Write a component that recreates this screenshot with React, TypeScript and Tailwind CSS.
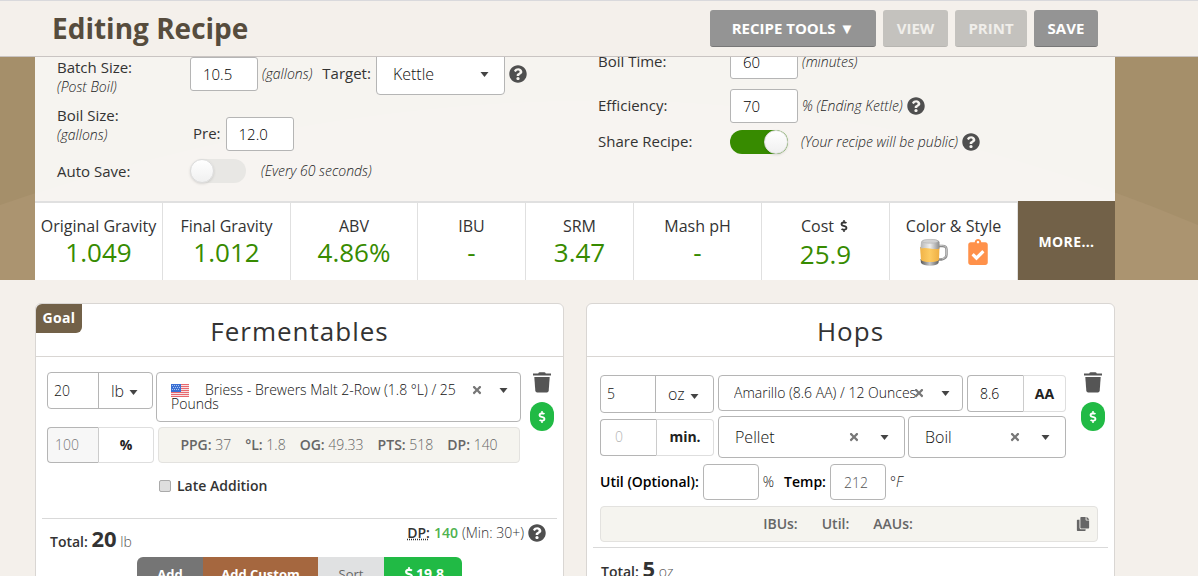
import type { ReactNode } from 'react';
import { FaClipboardCheck, FaCopy, FaDollarSign, FaQuestionCircle, FaTimes } from 'react-icons/fa';

const STATS = [
  { label: 'Original Gravity', value: '1.049' },
  { label: 'Final Gravity', value: '1.012' },
  { label: 'ABV', value: '4.86%' },
  { label: 'IBU', value: '-' },
  { label: 'SRM', value: '3.47' },
  { label: 'Mash pH', value: '-' },
];

const FERMENTABLE_FACTS = [
  ['PPG:', '37'],
  ['°L:', '1.8'],
  ['OG:', '49.33'],
  ['PTS:', '518'],
  ['DP:', '140'],
];

function Caret({ className = '' }: { className?: string }) {
  return (
    <svg viewBox="0 0 9 5" className={`h-[5px] w-[9px] fill-[#444] ${className}`} aria-hidden="true">
      <path d="M.5 0h8L4.5 5z" />
    </svg>
  );
}

function Help({ label }: { label: string }) {
  return (
    <button type="button" aria-label={label} className="shrink-0">
      <FaQuestionCircle className="size-[18px] text-[#4f4f4f]" />
    </button>
  );
}

function Trash() {
  return (
    <svg viewBox="0 0 18 21" className="h-[21px] w-[18px] fill-[#555]" aria-hidden="true">
      <path d="M0 1.5h5.2Q5.600 .3 6.800 .3h4.400q1.200 0 1.600 1.200H18v2H0z" />
      <path d="M1.300 5h15.400l-1 13.800q-.2 1.700-1.900 1.700H4.200q-1.700 0-1.900-1.700z" />
    </svg>
  );
}

function RowActions({ name }: { name: string }) {
  return (
    <div className="flex w-6 flex-col items-center gap-[9px]">
      <button type="button" aria-label={`Remove ${name}`}><Trash /></button>
      <button
        type="button"
        aria-label={`Set price of ${name}`}
        className="flex h-[29px] w-6 items-center justify-center rounded-full bg-[#21ba45] text-white"
      >
        <FaDollarSign className="size-3" />
      </button>
    </div>
  );
}

function BeerMug() {
  return (
    <svg viewBox="0 0 28 28" className="size-7" aria-hidden="true">
      <defs>
        <linearGradient id="foam" x1="0" x2="1">
          <stop offset="0" stopColor="#b5b5b5" />
          <stop offset=".5" stopColor="#efefef" />
          <stop offset="1" stopColor="#8b8b8b" />
        </linearGradient>
        <linearGradient id="beer" x1="0" x2="1">
          <stop offset="0" stopColor="#f0b247" />
          <stop offset=".5" stopColor="#fdcb62" />
          <stop offset="1" stopColor="#eeae42" />
        </linearGradient>
        <linearGradient id="base" x1="0" x2="1">
          <stop offset="0" stopColor="#555" />
          <stop offset=".5" stopColor="#c9c9c9" />
          <stop offset="1" stopColor="#5c5c5c" />
        </linearGradient>
      </defs>
      <path d="M18 8h4.500q4 0 4 3.500v5q0 4-5 5H18" fill="none" stroke="#8a8a8a" strokeWidth="2.400" />
      <path d="M18 7.500h4.500q4 0 4 3.500v5q0 4-4.500 5" fill="none" stroke="#cfcfcf" strokeWidth=".8" />
      <path d="M.5 21h18.500l-.5 4q-2 2.800-8.500 2.800T1 25z" fill="url(#base)" />
      <path d="M0 9h19.500l-.5 13q-2 2-9 2t-9-2z" fill="url(#beer)" />
      <path d="M1 4q1-3 9.200-3t9.300 3v6.500q-4 1-9.500 0T.5 10.500z" fill="url(#foam)" />
      <ellipse cx="10.200" cy="3.300" rx="8" ry="1.900" fill="#d2d2d2" stroke="#a8a8a8" strokeWidth=".5" />
    </svg>
  );
}

function UsFlag() {
  return (
    <svg viewBox="0 0 18 13" className="h-[13px] w-[18px]" aria-hidden="true">
      <rect width="18" height="13" fill="#f7e1e3" />
      <path d="M0 .5h18M0 2.500h18M0 4.500h18M0 6.500h18M0 8.500h18M0 10.500h18M0 12.500h18" stroke="#e8686e" />
      <rect width="10" height="8" fill="#3a6fd4" />
      <path d="M1 1.500h8M2 3.500h7M1 5.500h8" stroke="#a9c6f2" strokeDasharray="1 1" />
    </svg>
  );
}

function Toggle({ id, on = false }: { id: string; on?: boolean }) {
  return (
    <span className="flex shrink-0">
      <input id={id} type="checkbox" role="switch" defaultChecked={on} className="peer sr-only" />
      <label
        htmlFor={id}
        className="flex h-6 w-14 cursor-pointer rounded-full bg-[#e8e7e4] peer-checked:w-[58px] peer-checked:justify-end peer-checked:bg-[#378b00]"
      >
        <span className="size-6 rounded-full border border-[#dcdcdc] bg-linear-to-b from-white to-[#f0f0f0] shadow-sm" />
      </label>
    </span>
  );
}

type SelectProps = {
  label: string;
  value: string;
  className: string;
  selectClass: string;
  clearClass?: string;
  caretClass?: string;
};

function Dropdown({ label, value, className, selectClass, clearClass, caretClass = 'right-[15px]' }: SelectProps) {
  return (
    <div className={`relative flex shrink-0 items-center rounded border border-[#b5b5b5] bg-white ${className}`}>
      <select
        aria-label={label}
        className={`h-full w-full appearance-none bg-transparent text-[#111] outline-none ${selectClass}`}
      >
        <option>{value}</option>
      </select>
      {clearClass && (
        <button type="button" aria-label={`Clear ${label}`} className={`absolute ${clearClass}`}>
          <FaTimes className="size-3 text-[#777]" />
        </button>
      )}
      <Caret className={`pointer-events-none absolute ${caretClass}`} />
    </div>
  );
}

// Amount input glued to its unit picker
function Amount({ name, value, unit, className }: { name: string; value: string; unit: string; className: string }) {
  return (
    <div className={`flex rounded border border-[#b5b5b5] bg-white ${className}`}>
      <input aria-label={`${name} amount`} defaultValue={value} className="w-0 flex-1 border-r border-[#b5b5b5] px-[6px] text-sm text-[#111]" />
      <div className="relative flex w-[51%] items-center">
        <select aria-label={`${name} unit`} className="h-full w-full appearance-none pl-3 text-base text-[#222]">
          <option>{unit}</option>
        </select>
        <Caret className="pointer-events-none absolute right-[14px] mt-1" />
      </div>
    </div>
  );
}

function Suffixed({ label, suffix, className, children }: { label: string; suffix: string; className: string; children: ReactNode }) {
  return (
    <label aria-label={label} className={`flex text-sm ${className}`}>
      {children}
      <span className="flex flex-1 items-center justify-center rounded-r border border-[#dedede] border-l-[#ccc] bg-white font-bold text-[#222]">
        {suffix}
      </span>
    </label>
  );
}

function Header() {
  return (
    <header className="relative z-10 flex h-[57px] shrink-0 items-center justify-between border-t border-b border-t-[#d9d9dc] border-b-[#c9c4c2] bg-[#f4f0eb] pr-[100px] pl-[52px]">
      <h1 className="pb-0.5 text-[28px] font-bold text-[#564c3d]">Editing Recipe</h1>
      <div className="flex gap-[7px] text-[15px] font-bold text-white">
        <button type="button" className="h-[37px] w-[166px] rounded-[3px] border-b border-[#777] bg-[#949494]">RECIPE TOOLS ▼</button>
        <button type="button" disabled className="h-[37px] w-[65px] rounded-[3px] border-b border-[#b7b5b1] bg-[#c4c2be] text-[#f0eeea]">VIEW</button>
        <button type="button" disabled className="h-[37px] w-[72px] rounded-[3px] border-b border-[#b7b5b1] bg-[#c4c2be] text-[#f0eeea]">PRINT</button>
        <button type="button" className="h-[37px] w-16 rounded-[3px] border-b border-[#777] bg-[#949494]">SAVE</button>
      </div>
    </header>
  );
}

const FIELD = 'h-[34px] w-[68px] shrink-0 rounded-[3px] border border-[#b5b5b5] bg-white px-3 text-[15px] text-black';

function RecipeForm() {
  return (
    <form className="grid grid-cols-2 bg-white/90 pb-[18px] pl-[22px] text-sm font-light whitespace-nowrap text-[#222]">
      <div className="flex flex-col gap-2 pt-3">
        <div className="flex items-start">
          <label htmlFor="batch" className="w-[133px] shrink-0 pt-1">
            <span className="block text-[15px] leading-5 font-medium text-[#333]">Batch Size:</span>
            <em className="block leading-5">(Post Boil)</em>
          </label>
          <div className="flex h-[42px] items-center">
            <input id="batch" defaultValue="10.5" className={FIELD} />
            <em className="ml-1">(gallons)</em>
            <span className="ml-2.5 text-[15px] font-medium text-[#333]">Target:</span>
            <Dropdown label="Target" value="Kettle" className="ml-[5px] h-[42px] w-[129px]" selectClass="px-4 text-base" />
            <span className="ml-1 flex"><Help label="About target" /></span>
          </div>
        </div>
        <div className="flex items-start">
          <div className="w-[133px] shrink-0">
            <span className="block text-[15px] leading-5 font-medium text-[#333]">Boil Size:</span>
            <em className="block leading-5">(gallons)</em>
          </div>
          <div className="flex items-center pt-3 pl-[3px]">
            <label htmlFor="pre" className="mr-[5px] text-[15px] font-medium text-[#333]">Pre:</label>
            <input id="pre" defaultValue="12.0" className={FIELD} />
          </div>
        </div>
        <div className="flex items-center">
          <label htmlFor="autosave" className="w-[133px] shrink-0 text-[15px] leading-5 font-medium text-[#333]">Auto Save:</label>
          <Toggle id="autosave" />
          <em className="ml-[15px]">(Every 60 seconds)</em>
        </div>
      </div>

      <div className="flex flex-col gap-2.5 pt-1 pl-3">
        <div className="flex items-center">
          <label htmlFor="boil" className="w-[132px] text-[15px] font-medium text-[#333]">Boil Time:</label>
          <input id="boil" defaultValue="60" className={FIELD} />
          <em className="ml-1">(minutes)</em>
        </div>
        <div className="flex items-center">
          <label htmlFor="efficiency" className="w-[132px] text-[15px] font-medium text-[#333]">Efficiency:</label>
          <input id="efficiency" defaultValue="70" className={FIELD} />
          <em className="mr-1 ml-1">% (Ending Kettle)</em>
          <Help label="About efficiency" />
        </div>
        <div className="-mt-[3px] flex items-center">
          <label htmlFor="share" className="w-[132px] text-[15px] font-medium text-[#333]">Share Recipe:</label>
          <Toggle id="share" on />
          <em className="mr-1 ml-[13px]">(Your recipe will be public)</em>
          <Help label="About sharing" />
        </div>
      </div>
    </form>
  );
}

function StatsBar() {
  const cell = 'flex flex-col items-center border-t-2 border-r border-[#e0e0e0] bg-white pt-[11px] whitespace-nowrap';
  return (
    <div className="grid h-[79px] grid-cols-[128fr_128fr_127fr_108fr_108fr_128fr_128fr_128fr_97fr] text-base text-[#333]">
      {STATS.map((s) => (
        <div key={s.label} className={cell}>
          <span>{s.label}</span>
          <span className="text-[26px] leading-7 font-medium text-[#378b00]">{s.value}</span>
        </div>
      ))}
      <div className={cell}>
        <span className="flex items-center gap-1">Cost <FaDollarSign className="size-3" /></span>
        <span className="pt-0.5 text-[26px] leading-7 font-medium text-[#378b00]">25.9</span>
      </div>
      <div className={cell}>
        <span>Color &amp; Style</span>
        <div className="flex items-center gap-5">
          <BeerMug />
          <FaClipboardCheck className="h-[26px] w-5 text-[#ff914a]" />
        </div>
      </div>
      <button type="button" className="bg-[#726148] pt-0.5 text-sm font-bold tracking-wide text-white">MORE...</button>
    </div>
  );
}

function CardTitle({ children }: { children: ReactNode }) {
  return (
    <h2 className="border-b border-[#d9d6d3] pt-[11px] pb-[9px] text-center text-[26px] leading-8 font-medium tracking-[1px] text-[#333]">
      {children}
    </h2>
  );
}

function Fermentables() {
  return (
    <section className="relative rounded-md border border-[#d9d6d3] bg-white font-light">
      <button type="button" className="absolute top-0 left-0 h-[29px] w-[46px] rounded-tl-md rounded-br-md bg-[#726148] pb-0.5 text-sm font-bold tracking-wide text-white">
        Goal
      </button>
      <CardTitle>Fermentables</CardTitle>

      <div className="flex justify-between px-[9px] pt-[15px] pl-[11px]">
        <div className="flex flex-col gap-[5px]">
          <div className="flex gap-[3px]">
            <Amount name="Fermentable" value="20" unit="lb" className="h-[37px] w-[106px]" />
            <div className="relative flex h-[50px] w-[365px] rounded border border-[#b5b5b5]">
              <button type="button" role="combobox" aria-expanded="false" aria-controls="malts" aria-label="Fermentable" className="w-full pr-14 pl-3.5 text-left text-sm leading-[14px] text-[#111]">
                <span className="mr-4 inline-block align-middle"><UsFlag /></span>
                Briess - Brewers Malt 2-Row (1.8 °L) / 25 Pounds
              </button>
              <button type="button" aria-label="Clear fermentable" className="absolute top-[11px] right-[37px]">
                <FaTimes className="size-3 text-[#777]" />
              </button>
              <Caret className="pointer-events-none absolute top-[15px] right-3" />
            </div>
          </div>
          <div className="flex gap-1 pr-px">
            <Suffixed label="Percent of bill" suffix="%" className="h-9 w-[107px]">
              <input readOnly value="100" className="w-[51px] rounded-l border border-r-0 border-[#b5b5b5] bg-[#f7f7f7] px-[7px] text-[#777]" />
            </Suffixed>
            <div className="flex flex-1 items-center justify-center gap-3.5 rounded border border-[#e3e2df] bg-[#f5f4ef] text-sm text-[#666]">
              {FERMENTABLE_FACTS.map(([k, v]) => (
                <span key={k}><b className="font-semibold">{k}</b> {v}</span>
              ))}
            </div>
          </div>
          <label className="mt-1 ml-28 flex h-7 items-center gap-[6px] text-sm font-semibold text-[#333]">
            <input type="checkbox" className="size-3 appearance-none rounded-xs border border-[#aaa] bg-[#dedede]" />
            Late Addition
          </label>
        </div>
        <RowActions name="fermentable" />
      </div>

      <div className="mx-[6px] mt-[18px] flex justify-between border-t border-[#d9d9d9] pr-[11px] pl-2">
        <p className="pt-1 text-sm text-[#555]">
          <b className="font-semibold text-[#333]">Total: <span className="text-[22px] font-bold">20</span></b> lb
        </p>
        <div className="flex h-7 items-center gap-1 text-sm text-[#333]">
          <abbr title="Diastatic power" className="font-semibold underline decoration-dotted">DP:</abbr>
          <b className="font-semibold text-[#4fb24f]">140</b>
          <span>(Min: 30+)</span>
          <Help label="About diastatic power" />
        </div>
      </div>

      <div className="mt-[3px] ml-[101px] flex w-[325px] overflow-hidden rounded-md text-[13px] font-bold text-white">
        <button type="button" className="h-[34px] w-[66px] bg-[#757575]">Add</button>
        <button type="button" className="h-[34px] w-[115px] bg-[#a5673f]">Add Custom</button>
        <button type="button" className="h-[34px] w-[66px] bg-[#e0e1e2] font-normal text-[#666]">Sort</button>
        <button type="button" className="flex h-[34px] flex-1 items-center justify-center bg-[#21ba45] text-sm"><FaDollarSign className="size-3.5" />19.8</button>
      </div>
    </section>
  );
}

function Hops() {
  return (
    <section className="rounded-md border border-[#d9d6d3] bg-white font-light">
      <CardTitle>Hops</CardTitle>

      <div className="flex justify-between pt-[15px] pr-[9px] pl-[13px]">
        <div className="flex w-[466px] flex-col gap-[5px] pt-[3px]">
          <div className="flex gap-1">
            <Amount name="Hop" value="5" unit="oz" className="h-[38px] w-[114px]" />
            <Dropdown label="Hop" value="Amarillo (8.6 AA) / 12 Ounces" className="h-9 w-[245px]" selectClass="pl-[15px] text-sm" clearClass="right-[37px]" caretClass="right-3" />
            <Suffixed label="Alpha acid" suffix="AA" className="h-[37px] flex-1">
              <input defaultValue="8.6" className="w-14 rounded-l border border-r-0 border-[#b5b5b5] px-3 text-black" />
            </Suffixed>
          </div>
          <div className="-mt-0.5 flex items-center gap-[3px]">
            <Suffixed label="Time" suffix="min." className="mr-px h-[37px] w-[114px]">
              <input placeholder="0" className="w-14 rounded-l border border-r-0 border-[#b5b5b5] px-3.5 placeholder:text-[#b4b4b4]" />
            </Suffixed>
            <Dropdown label="Hop type" value="Pellet" className="h-[42px] w-[187px]" selectClass="px-4 text-base" clearClass="right-11" />
            <Dropdown label="Hop use" value="Boil" className="h-[42px] flex-1" selectClass="px-4 text-base" clearClass="right-11" />
          </div>
          <div className="mt-px flex items-center text-sm text-[#111]">
            <label htmlFor="util" className="font-semibold text-black">Util (Optional):</label>
            <input id="util" className="mr-1 ml-1 h-9 w-14 rounded border border-[#b5b5b5] px-3" />
            %
            <label htmlFor="temp" className="ml-2.5 font-semibold text-black">Temp:</label>
            <input id="temp" placeholder="212" className="mx-1 h-9 w-14 rounded border border-[#b5b5b5] px-[13px] placeholder:text-[#555]" />
            <em>°F</em>
          </div>
        </div>
        <RowActions name="hop" />
      </div>

      <div className="mt-[6px] mr-4 ml-[13px] flex h-9 items-center rounded border border-[#e3e2df] bg-[#f5f4ef] px-[7px] text-sm font-semibold text-[#666]">
        <div className="flex flex-1 justify-center gap-6 pr-2">
          <span>IBUs:</span>
          <span>Util:</span>
          <span>AAUs:</span>
        </div>
        <button type="button" aria-label="Copy hop"><FaCopy className="size-3.5 text-[#666]" /></button>
      </div>

      <p className="mx-[6px] mt-[5px] border-t border-[#d9d9d9] pt-[5px] pb-10 pl-2 text-sm text-[#555]">
        <b className="font-semibold text-[#333]">Total: <span className="text-[22px] font-bold">5</span></b> oz
      </p>
    </section>
  );
}

export default function App() {
  return (
    <div className="flex h-screen flex-col overflow-hidden bg-[#f4f0eb] font-['Open_Sans',sans-serif]">
      <Header />
      <div className="relative -mt-4 shrink-0 bg-[#a58f6a]">
        <svg viewBox="0 0 1198 239" preserveAspectRatio="none" className="absolute inset-0 size-full" aria-hidden="true">
          <path d="M0 164Q300 60 600 59T1198 184V239H0z" fill="#ab9470" />
        </svg>
        <div className="relative mr-[83px] ml-[35px]">
          <RecipeForm />
          <StatsBar />
        </div>
      </div>
      <main className="mt-[23px] mr-[83px] ml-[35px] grid grid-cols-2 items-start gap-[22px]">
        <Fermentables />
        <Hops />
      </main>
    </div>
  );
}
